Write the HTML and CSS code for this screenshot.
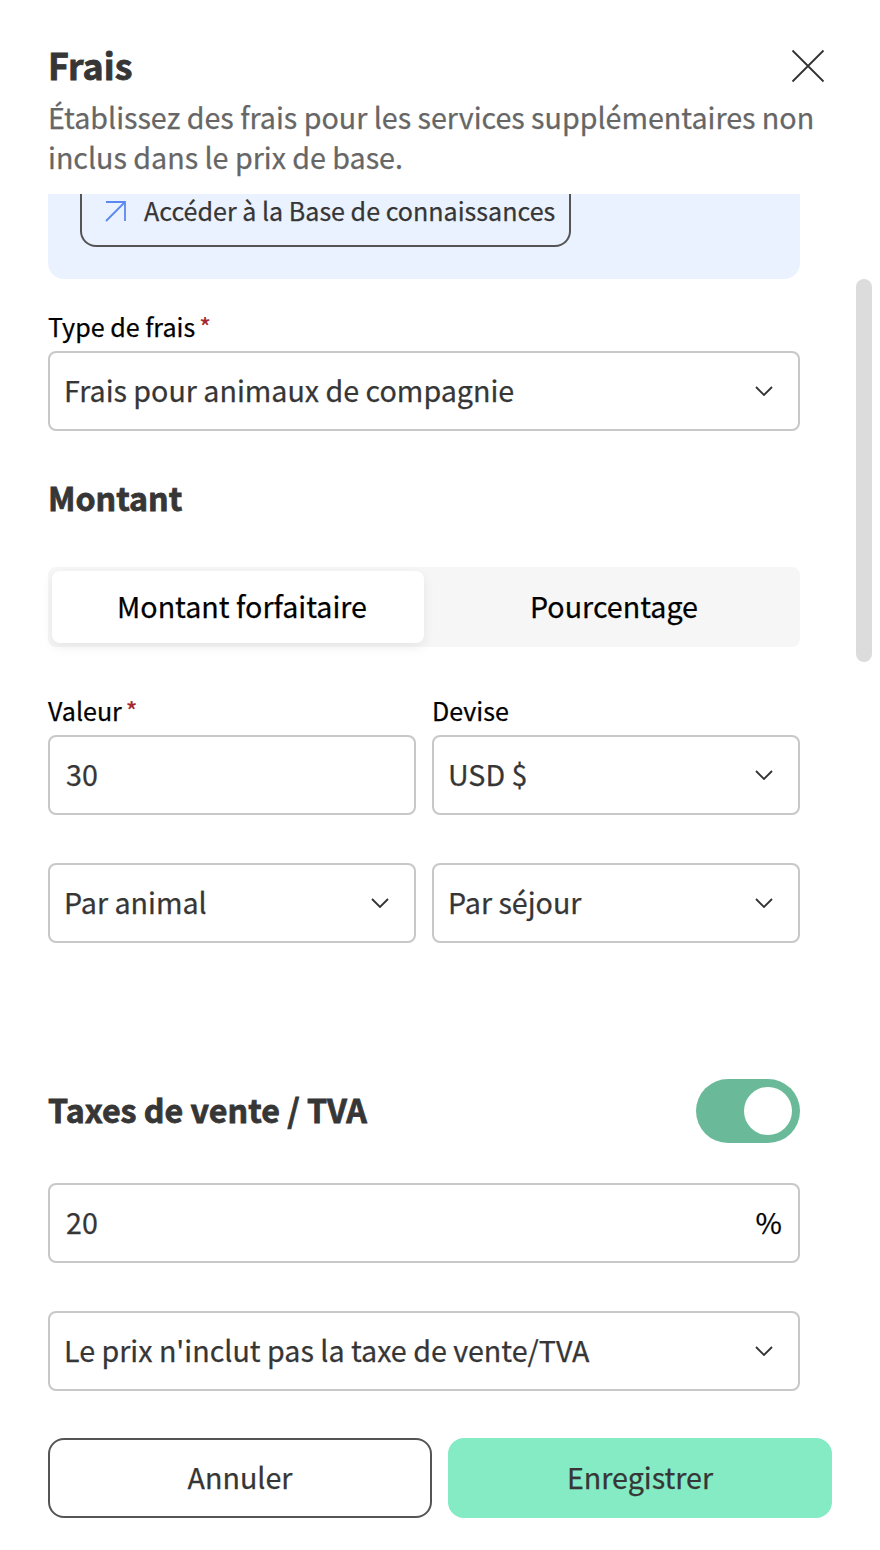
FILE: index.html
```html
<!DOCTYPE html>
<html lang="fr">
<head>
    <meta charset="UTF-8">
    <meta name="viewport" content="width=device-width, initial-scale=1.0">
    <title>Frais</title>
    <link rel="stylesheet" href="styles.css">
</head>
<body>

<div class="panel">
    <header class="header">
        <div class="title-row">
            <h1>Frais</h1>
            <button class="close" aria-label="Fermer">
                <svg width="34" height="34" viewBox="0 0 34 34"><path d="M1.5 1.5l31 31M32.5 1.5l-31 31"/></svg>
            </button>
        </div>
        <p class="subtitle">Établissez des frais pour les services supplémentaires non inclus dans le prix de base.</p>
    </header>

    <div class="body">
        <main class="content">
            <div class="info">
                <a class="info-link">
                    <svg width="22" height="22" viewBox="0 0 22 22"><path d="M1 21L20 2M1 2h19v19"/></svg>
                    <span>Accéder à la Base de connaissances</span>
                </a>
            </div>

            <div class="label type-label">Type de frais<span class="req">*</span></div>
            <div class="field">
                <span>Frais pour animaux de compagnie</span>
                <svg class="chevron" width="18" height="10" viewBox="0 0 18 10"><path d="M1 1l8 8 8-8"/></svg>
            </div>

            <h2 class="amount-title">Montant</h2>
            <div class="tabs">
                <button class="tab active">Montant forfaitaire</button>
                <button class="tab">Pourcentage</button>
            </div>

            <div class="grid">
                <div>
                    <div class="label">Valeur<span class="req">*</span></div>
                    <div class="field input"><span>30</span></div>
                </div>
                <div>
                    <div class="label">Devise</div>
                    <div class="field">
                        <span>USD $</span>
                        <svg class="chevron" width="18" height="10" viewBox="0 0 18 10"><path d="M1 1l8 8 8-8"/></svg>
                    </div>
                </div>
                <div class="field">
                    <span>Par animal</span>
                    <svg class="chevron" width="18" height="10" viewBox="0 0 18 10"><path d="M1 1l8 8 8-8"/></svg>
                </div>
                <div class="field">
                    <span>Par séjour</span>
                    <svg class="chevron" width="18" height="10" viewBox="0 0 18 10"><path d="M1 1l8 8 8-8"/></svg>
                </div>
            </div>

            <div class="tax-row">
                <h2>Taxes de vente / TVA</h2>
                <div class="toggle"><div class="knob"></div></div>
            </div>
            <div class="field input"><span>20</span><span class="unit">%</span></div>
            <div class="field tax-mode">
                <span>Le prix n'inclut pas la taxe de vente/TVA</span>
                <svg class="chevron" width="18" height="10" viewBox="0 0 18 10"><path d="M1 1l8 8 8-8"/></svg>
            </div>
        </main>
        <div class="scrollbar"></div>
    </div>

    <footer class="footer">
        <button class="btn">Annuler</button>
        <button class="btn primary">Enregistrer</button>
    </footer>
</div>

</body>
</html>
```
FILE: styles.css
```css
* { box-sizing: border-box; }
body { margin: 0; background: #fff; color: #363636; font-family: "Noto Sans CJK SC", sans-serif; font-size: 28.65px; line-height: 40px; -webkit-text-stroke: 0.25px; }
h1, h2, p { margin: 0; }
button { font: inherit; color: inherit; border: 0; padding: 0; background: none; cursor: pointer; }
svg { display: block; fill: none; flex-shrink: 0; }

.panel { width: 880px; height: 1550px; display: flex; flex-direction: column; overflow: hidden; }

/* Header */
.header { height: 194px; padding: 40px 48px 0; }
.title-row { display: flex; justify-content: space-between; height: 57px; }
h1 { font-size: 35.8px; line-height: 48px; font-weight: 700; -webkit-text-stroke: 0.8px; }
.close { width: 34px; height: 34px; margin: 9px 7px 0 0; }
.close svg { stroke: #333; stroke-width: 1.8; }
.subtitle { color: #666; }

/* Scrolling area */
.body { display: flex; height: 1220px; }
.content { width: 752px; margin-left: 48px; }
.info { height: 85px; padding: 0 32px; background: #ebf2ff; border-radius: 0 0 16px 16px; }
.info-link { display: flex; align-items: center; gap: 17px; width: 491px; height: 53px; padding: 0 0 17px 23px; border: 2px solid #555; border-top: 0; border-radius: 0 0 16px 16px; font-size: 25.07px; white-space: nowrap; }
.info-link svg { stroke: #5b87f0; stroke-width: 1.8; }
.info-link span { padding-bottom: 2px; }
.scrollbar { width: 16px; height: 383px; margin: 85px 0 0 56px; border-radius: 8px; background: #dcdcdc; }

.label { height: 40px; margin-bottom: 5px; font-size: 25.07px; color: #000; white-space: nowrap; }
.type-label { margin-top: 27px; }
.req { margin-left: 4px; color: #a4262c; }
.field { display: flex; align-items: center; justify-content: space-between; height: 80px; padding: 0 25px 0 14px; border: 2px solid #c8c8c8; border-radius: 8px; white-space: nowrap; }
.field span { padding-bottom: 2px; }
.field.input { padding: 0 16px; }
.unit { color: #000; }
.chevron { stroke: #333; stroke-width: 1.8; }

h2 { font-size: 32.2px; line-height: 40px; font-weight: 700; -webkit-text-stroke: 0.8px; }
.amount-title { margin: 46px 0 50px; }
.tabs { display: flex; gap: 4px; height: 80px; padding: 4px 0 4px 4px; border-radius: 8px; background: #f6f6f6; }
.tab { width: 372px; height: 72px; padding-bottom: 2px; border-radius: 8px; color: #000; }
.tab.active { padding-left: 8px; background: #fff; box-shadow: 0 4px 12px rgba(0, 0, 0, 0.07); }
.grid { display: grid; grid-template-columns: 1fr 1fr; column-gap: 16px; row-gap: 48px; margin-top: 43px; }

.tax-row { display: flex; align-items: center; justify-content: space-between; height: 64px; margin: 136px 0 40px; }
.tax-row h2 { padding-bottom: 4px; }
.toggle { display: flex; justify-content: flex-end; width: 104px; height: 64px; padding: 8px; border-radius: 32px; background: #6aba9a; }
.knob { width: 48px; height: 48px; border-radius: 50%; background: #fff; }
.tax-mode { margin-top: 48px; }

/* Footer */
.footer { display: flex; gap: 16px; padding: 24px 48px 0; }
.btn { width: 384px; height: 80px; padding-bottom: 2px; border: 2px solid #555; border-radius: 16px; }
.btn.primary { border-color: #84ebc4; background: #84ebc4; }
```
